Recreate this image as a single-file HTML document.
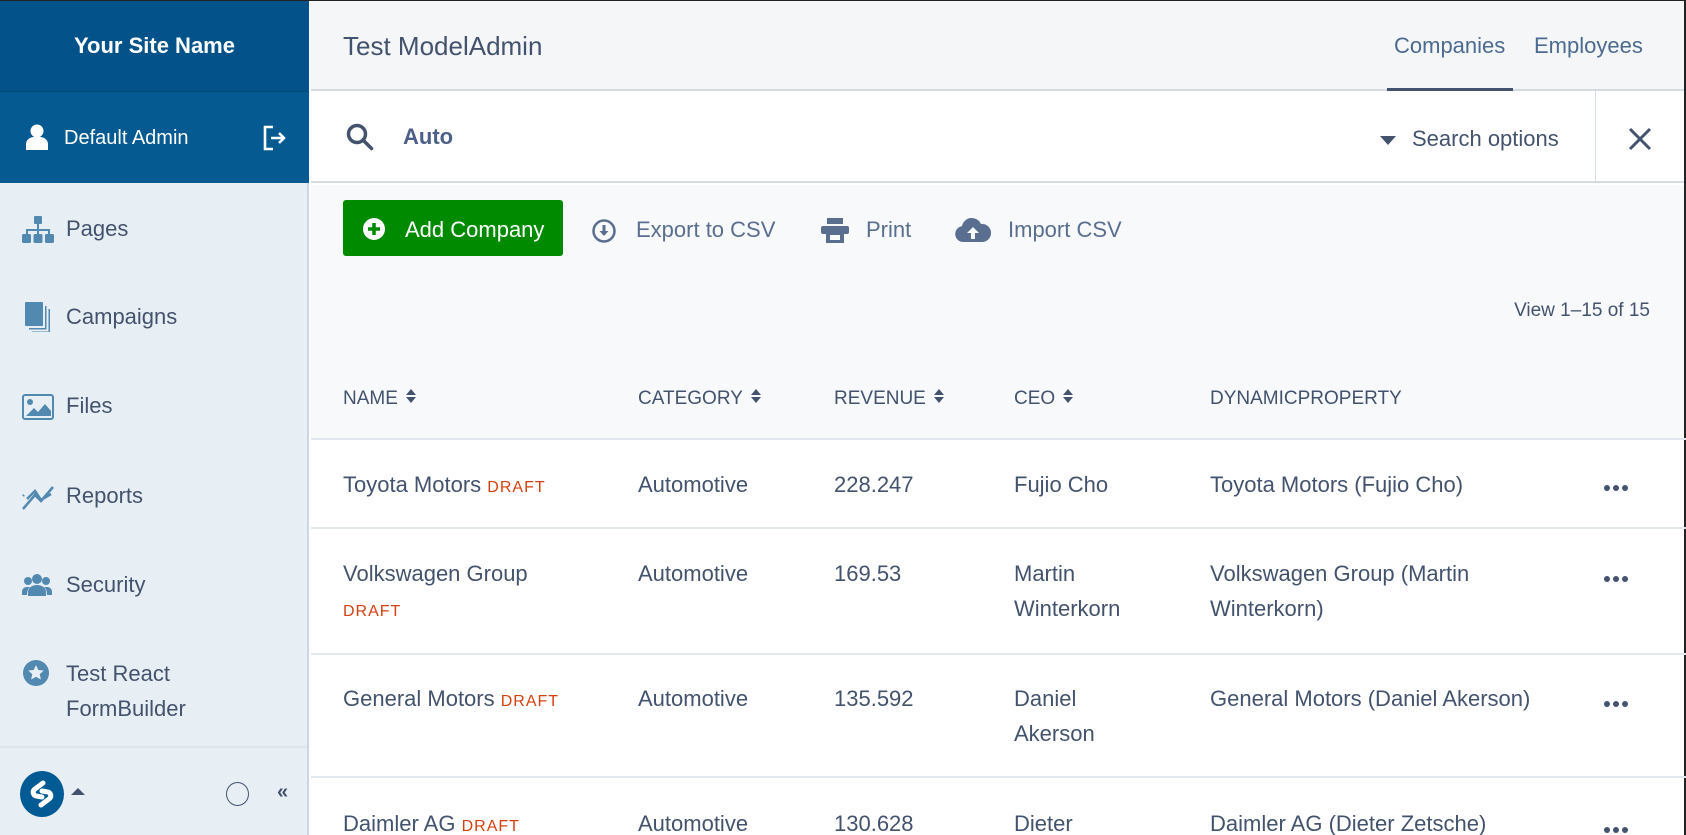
<!DOCTYPE html>
<html style="width:1686px;height:835px;overflow:hidden"><head><meta charset="utf-8"><style>
*{box-sizing:border-box;margin:0;padding:0}
body{width:1686px;height:835px;overflow:hidden;font-family:"Liberation Sans",Arial,sans-serif;color:#43536d;background:#fff;position:relative}
.a{position:absolute;white-space:nowrap}
.side{position:absolute;left:0;top:0;width:309px;height:835px;background:#e8eff4;border-right:2px solid #cdd6e2}
.nav{position:absolute;left:66px;font-size:22px;color:#43536d}
.ic{position:absolute;left:22px}
.cell{position:absolute;font-size:22px;line-height:35px;white-space:normal}
.d{color:#d4400f;font-size:16px;letter-spacing:1px}
.hd{position:absolute;top:386px;font-size:19px;line-height:26px}
.sort{display:inline-block;width:10px;height:14px;margin-left:8px;vertical-align:1px}
.line{position:absolute;left:311px;right:0;height:2px;background:#e3e7ee}
.dots{position:absolute;left:1604px}
.dots i{display:inline-block;width:6px;height:6px;border-radius:50%;background:#43536d;margin-right:3px}
</style></head><body>
<div class="side">
 <div class="a" style="left:0;top:0;width:309px;height:91px;background:#03538a;color:#fff;font-weight:bold;font-size:22px;line-height:91px;text-align:center">Your Site Name</div>
 <div class="a" style="left:0;top:91px;width:309px;height:92px;background:#055a92;border-top:1px solid #024a7a"></div>
 <svg class="a" style="left:26px;top:124px" width="22" height="26" viewBox="0 0 22 26"><circle cx="11" cy="7" r="6.5" fill="#fff"/><path d="M0 26v-6c0-4 4-7 8-7h6c4 0 8 3 8 7v6z" fill="#fff"/></svg>
 <div class="a" style="left:64px;top:124px;font-size:20px;color:#fff;line-height:28px">Default Admin</div>
 <svg class="a" style="left:262px;top:125px" width="26" height="26" viewBox="0 0 26 26" fill="none" stroke="#fff" stroke-width="2.6"><path d="M11 2H3v22h8"/><path d="M9 13h13M17 8l5 5-5 5"/></svg>
 <svg class="ic" style="top:216px" width="32" height="28" viewBox="0 0 32 28" fill="#5289b0"><rect x="12" y="0" width="8" height="8" rx="1"/><rect x="15" y="8" width="2" height="6"/><rect x="4" y="13" width="24" height="2"/><rect x="4" y="13" width="2" height="6"/><rect x="26" y="13" width="2" height="6"/><rect x="15" y="13" width="2" height="6"/><rect x="0" y="18" width="9" height="9" rx="1.5"/><rect x="11.5" y="18" width="9" height="9" rx="1.5"/><rect x="23" y="18" width="9" height="9" rx="1.5"/></svg>
 <div class="nav" style="top:215px;line-height:28px">Pages</div>
 <svg class="ic" style="top:302px;left:24px" width="28" height="30" viewBox="0 0 28 30" fill="#5289b0"><rect x="1" y="0" width="18" height="24" rx="1"/><path d="M21 4v22H5v1.5h17.5V4z M24.5 7v22.5H8V31h18V7z" /></svg>
 <div class="nav" style="top:303px;line-height:28px">Campaigns</div>
 <svg class="ic" style="top:394px" width="32" height="26" viewBox="0 0 32 26"><rect x="1" y="1" width="30" height="24" rx="2" fill="none" stroke="#5289b0" stroke-width="2"/><circle cx="8" cy="8" r="3" fill="#5289b0"/><path d="M4 22l8-8 4 4 7-8 6 7v5z" fill="#5289b0"/></svg>
 <div class="nav" style="top:392px;line-height:28px">Files</div>
 <svg class="ic" style="top:482px" width="32" height="28" viewBox="0 0 32 28" fill="none" stroke="#5289b0" stroke-width="2.5"><path d="M1 27l12-14 6 6 12-14M1 14l1-1M5 17l8-8 6 9 10-6"/></svg>
 <div class="nav" style="top:482px;line-height:28px">Reports</div>
 <svg class="ic" style="top:573px" width="30" height="24" viewBox="0 0 30 24" fill="#5289b0"><circle cx="15" cy="6" r="5"/><circle cx="6" cy="8" r="4"/><circle cx="24" cy="8" r="4"/><path d="M6 23v-4c0-4 4-7 9-7s9 3 9 7v4z"/><path d="M0 22v-3c0-3 2-5 5-5h3c-2 2-3 4-3 8z M30 22v-3c0-3-2-5-5-5h-3c2 2 3 4 3 8z"/></svg>
 <div class="nav" style="top:571px;line-height:28px">Security</div>
 <svg class="ic" style="top:660px;left:23px" width="26" height="26" viewBox="0 0 26 26"><circle cx="13" cy="13" r="13" fill="#5289b0"/><path d="M13 5l2.3 5 5.4.5-4 3.7 1.2 5.3L13 16.8l-4.9 2.7 1.2-5.3-4-3.7 5.4-.5z" fill="#e8eff4"/></svg>
 <div class="nav" style="top:656px;line-height:35px">Test React<br>FormBuilder</div>
 <div class="a" style="left:0;top:746px;width:307px;height:2px;background:#dde4ea"></div>
 <svg class="a" style="left:19px;top:770px" width="46" height="48" viewBox="0 0 46 48"><ellipse cx="23" cy="24" rx="22" ry="23" fill="#005a93"/><path d="M24 13l-8 6c-3 2-2 6 1 7l6 1 M22 35l8-6c3-2 2-6-1-7l-6-1" fill="none" stroke="#fff" stroke-width="5" stroke-linecap="round"/></svg>
 <div class="a" style="left:71px;top:788px;width:0;height:0;border-left:7px solid transparent;border-right:7px solid transparent;border-bottom:7px solid #43536d"></div>
 <div class="a" style="left:226px;top:782px;width:23px;height:24px;border:1.5px solid #43536d;border-radius:50%"></div>
 <div class="a" style="left:277px;top:781px;font-size:20px;font-weight:bold;color:#43536d">«</div>
</div>
<div class="a" style="left:311px;top:0;right:0;height:91px;background:#f4f6f8;border-bottom:2px solid #d5dbe3"></div>
<div class="a" style="left:0;top:0;width:1686px;height:1px;background:#222"></div>
<div class="a" style="left:1684px;top:0;width:2px;height:835px;background:#222"></div>
<div class="a" style="left:343px;top:30px;font-size:26px;line-height:32px">Test ModelAdmin</div>
<div class="a" style="left:1394px;top:33px;font-size:22px;color:#4d6a91">Companies</div>
<div class="a" style="left:1534px;top:33px;font-size:22px;color:#4d6a91">Employees</div>
<div class="a" style="left:1387px;top:88px;width:126px;height:3px;background:#43536d"></div>
<div class="a" style="left:311px;top:91px;right:2px;height:92px;background:#fff;border-bottom:2px solid #d5dbe3"></div>
<svg class="a" style="left:346px;top:123px" width="28" height="28" viewBox="0 0 28 28" fill="none" stroke="#43536d" stroke-width="3.5"><circle cx="11" cy="11" r="8.5"/><path d="M17.5 17.5l8 8" stroke-linecap="round"/></svg>
<div class="a" style="left:403px;top:124px;font-size:22px;font-weight:bold;color:#4d6089">Auto</div>
<div class="a" style="left:1380px;top:136px;width:0;height:0;border-left:8px solid transparent;border-right:8px solid transparent;border-top:9px solid #43536d"></div>
<div class="a" style="left:1412px;top:126px;font-size:22px">Search options</div>
<div class="a" style="left:1595px;top:91px;width:1px;height:92px;background:#d5dbe3"></div>
<svg class="a" style="left:1628px;top:127px" width="24" height="24" viewBox="0 0 24 24" stroke="#43536d" stroke-width="3"><path d="M2 2l20 20M22 2L2 22"/></svg>
<div class="a" style="left:311px;top:185px;right:2px;height:254px;background:#f8f9fb"></div>
<div class="a" style="left:343px;top:200px;width:220px;height:56px;background:#008a00;border-radius:3px"></div>
<svg class="a" style="left:363px;top:218px" width="22" height="22" viewBox="0 0 22 22"><circle cx="11" cy="11" r="11" fill="#fff"/><path d="M11 5v12M5 11h12" stroke="#008a00" stroke-width="3.5"/></svg>
<div class="a" style="left:405px;top:217px;font-size:22px;color:#fff">Add Company</div>
<svg class="a" style="left:592px;top:219px" width="24" height="24" viewBox="0 0 24 24"><circle cx="12" cy="12" r="10.5" fill="none" stroke="#5a6e8f" stroke-width="2.5"/><path d="M12 6v7" stroke="#5a6e8f" stroke-width="3"/><path d="M7.5 12h9l-4.5 5z" fill="#5a6e8f"/></svg>
<div class="a" style="left:636px;top:217px;font-size:22px;color:#5a6e8f">Export to CSV</div>
<svg class="a" style="left:821px;top:218px" width="28" height="25" viewBox="0 0 28 25" fill="#5a6e8f"><rect x="6" y="0" width="16" height="6"/><rect x="0" y="8" width="28" height="8" rx="2"/><path d="M5 14h18v11H5z M9 17v5h10v-5z" fill-rule="evenodd"/></svg>
<div class="a" style="left:866px;top:217px;font-size:22px;color:#5a6e8f">Print</div>
<svg class="a" style="left:955px;top:216px" width="36" height="26" viewBox="0 0 36 26"><path d="M8 26a8 8 0 0 1-1-15.9A10 10 0 0 1 26 8a8 8 0 0 1 2 18z" fill="#5a6e8f"/><path d="M18 11l-6 6h4v6h4v-6h4z" fill="#f8f9fb"/></svg>
<div class="a" style="left:1008px;top:217px;font-size:22px;color:#5a6e8f">Import CSV</div>
<div class="a" style="left:1504px;top:300px;font-size:19px;width:146px;text-align:right">View 1–15 of 15</div>
<div class="hd" style="left:343px">NAME<svg class="sort" viewBox="0 0 10 14" fill="#43536d"><path d="M5 0l5 6H0zM5 14l5-6H0z"/></svg></div>
<div class="hd" style="left:638px">CATEGORY<svg class="sort" viewBox="0 0 10 14" fill="#43536d"><path d="M5 0l5 6H0zM5 14l5-6H0z"/></svg></div>
<div class="hd" style="left:834px">REVENUE<svg class="sort" viewBox="0 0 10 14" fill="#43536d"><path d="M5 0l5 6H0zM5 14l5-6H0z"/></svg></div>
<div class="hd" style="left:1014px">CEO<svg class="sort" viewBox="0 0 10 14" fill="#43536d"><path d="M5 0l5 6H0zM5 14l5-6H0z"/></svg></div>
<div class="hd" style="left:1210px">DYNAMICPROPERTY</div>
<div class="line" style="top:438px"></div>
<div class="cell" style="left:343px;top:467px;width:275px">Toyota Motors <span class="d">DRAFT</span></div>
<div class="cell" style="left:638px;top:467px">Automotive</div>
<div class="cell" style="left:834px;top:467px">228.247</div>
<div class="cell" style="left:1014px;top:467px;width:160px">Fujio Cho</div>
<div class="cell" style="left:1210px;top:467px;width:340px">Toyota Motors (Fujio Cho)</div>
<div class="dots" style="top:478px"><i></i><i></i><i></i></div>
<div class="line" style="top:527px"></div>
<div class="cell" style="left:343px;top:556px;width:225px">Volkswagen Group <span class="d">DRAFT</span></div>
<div class="cell" style="left:638px;top:556px">Automotive</div>
<div class="cell" style="left:834px;top:556px">169.53</div>
<div class="cell" style="left:1014px;top:556px;width:140px">Martin Winterkorn</div>
<div class="cell" style="left:1210px;top:556px;width:340px">Volkswagen Group (Martin Winterkorn)</div>
<div class="dots" style="top:569px"><i></i><i></i><i></i></div>
<div class="line" style="top:653px"></div>
<div class="cell" style="left:343px;top:681px;width:275px">General Motors <span class="d">DRAFT</span></div>
<div class="cell" style="left:638px;top:681px">Automotive</div>
<div class="cell" style="left:834px;top:681px">135.592</div>
<div class="cell" style="left:1014px;top:681px;width:140px">Daniel Akerson</div>
<div class="cell" style="left:1210px;top:681px;width:340px">General Motors (Daniel Akerson)</div>
<div class="dots" style="top:694px"><i></i><i></i><i></i></div>
<div class="line" style="top:776px"></div>
<div class="cell" style="left:343px;top:806px;width:275px">Daimler AG <span class="d">DRAFT</span></div>
<div class="cell" style="left:638px;top:806px">Automotive</div>
<div class="cell" style="left:834px;top:806px">130.628</div>
<div class="cell" style="left:1014px;top:806px;width:140px">Dieter</div>
<div class="cell" style="left:1210px;top:806px;width:340px">Daimler AG (Dieter Zetsche)</div>
<div class="dots" style="top:820px"><i></i><i></i><i></i></div>
</body></html>
